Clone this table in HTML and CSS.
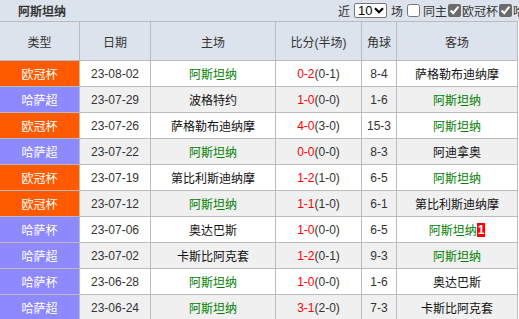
FILE: index.html
```html
<!DOCTYPE html>
<html lang="zh">
<head>
<meta charset="utf-8">
<title>阿斯坦纳</title>
<link rel="stylesheet" href="styles.css">
</head>
<body>
<div class="page">
  <div class="topbar">
    <span class="title">阿斯坦纳</span>
    <div class="controls">
      <span class="lbl">近</span>
      <span class="selwrap">
        <select class="count"><option>10</option><option>20</option></select>
        <svg class="chev" width="10" height="7" viewBox="0 0 10 7"><path d="M1 1.2 L5 5.2 L9 1.2" fill="none" stroke="#000" stroke-width="2.2"/></svg>
      </span>
      <span class="lbl">场</span>
      <input type="checkbox" class="cb cb-first">
      <span class="lbl">同主</span>
      <input type="checkbox" class="cb cb-on" checked>
      <span class="lbl">欧冠杯</span>
      <input type="checkbox" class="cb cb-on" checked>
      <span class="lbl">哈萨超</span>
    </div>
  </div>
  <div class="grid">
    <div class="cell head">类型</div>
    <div class="cell head">日期</div>
    <div class="cell head">主场</div>
    <div class="cell head">比分(半场)</div>
    <div class="cell head">角球</div>
    <div class="cell head">客场</div>

    <div class="cell type ucl">欧冠杯</div>
    <div class="cell date">23-08-02</div>
    <div class="cell team us">阿斯坦纳</div>
    <div class="cell score"><span class="ft">0-2</span>(0-1)</div>
    <div class="cell corner">8-4</div>
    <div class="cell team">萨格勒布迪纳摩</div>

    <div class="cell type kz">哈萨超</div>
    <div class="cell date alt">23-07-29</div>
    <div class="cell team alt">波格特约</div>
    <div class="cell score alt"><span class="ft">1-0</span>(0-0)</div>
    <div class="cell corner alt">1-6</div>
    <div class="cell team us alt">阿斯坦纳</div>

    <div class="cell type ucl">欧冠杯</div>
    <div class="cell date">23-07-26</div>
    <div class="cell team">萨格勒布迪纳摩</div>
    <div class="cell score"><span class="ft">4-0</span>(3-0)</div>
    <div class="cell corner">15-3</div>
    <div class="cell team us">阿斯坦纳</div>

    <div class="cell type kz">哈萨超</div>
    <div class="cell date alt">23-07-22</div>
    <div class="cell team us alt">阿斯坦纳</div>
    <div class="cell score alt"><span class="ft">0-0</span>(0-0)</div>
    <div class="cell corner alt">8-3</div>
    <div class="cell team alt">阿迪拿奥</div>

    <div class="cell type ucl">欧冠杯</div>
    <div class="cell date">23-07-19</div>
    <div class="cell team">第比利斯迪纳摩</div>
    <div class="cell score"><span class="ft">1-2</span>(1-0)</div>
    <div class="cell corner">6-5</div>
    <div class="cell team us">阿斯坦纳</div>

    <div class="cell type ucl">欧冠杯</div>
    <div class="cell date alt">23-07-12</div>
    <div class="cell team us alt">阿斯坦纳</div>
    <div class="cell score alt"><span class="ft">1-1</span>(1-0)</div>
    <div class="cell corner alt">6-1</div>
    <div class="cell team alt">第比利斯迪纳摩</div>

    <div class="cell type kz">哈萨杯</div>
    <div class="cell date">23-07-06</div>
    <div class="cell team">奥达巴斯</div>
    <div class="cell score"><span class="ft">1-0</span>(0-0)</div>
    <div class="cell corner">6-5</div>
    <div class="cell team us">阿斯坦纳<span class="badge">1</span></div>

    <div class="cell type kz">哈萨超</div>
    <div class="cell date alt">23-07-02</div>
    <div class="cell team alt">卡斯比阿克套</div>
    <div class="cell score alt"><span class="ft">1-2</span>(0-1)</div>
    <div class="cell corner alt">9-3</div>
    <div class="cell team us alt">阿斯坦纳</div>

    <div class="cell type kz">哈萨杯</div>
    <div class="cell date">23-06-28</div>
    <div class="cell team us">阿斯坦纳</div>
    <div class="cell score"><span class="ft">1-0</span>(0-0)</div>
    <div class="cell corner">1-6</div>
    <div class="cell team">奥达巴斯</div>

    <div class="cell type kz">哈萨超</div>
    <div class="cell date alt">23-06-24</div>
    <div class="cell team us alt">阿斯坦纳</div>
    <div class="cell score alt"><span class="ft">3-1</span>(2-0)</div>
    <div class="cell corner alt">7-3</div>
    <div class="cell team alt">卡斯比阿克套</div>
  </div>
</div>
</body>
</html>
```
FILE: styles.css
```css
html, body {
  margin: 0;
  padding: 0;
  background: #ffffff;
  overflow: hidden;
}
body {
  font-family: "Liberation Sans", "Noto Sans CJK SC", sans-serif;
  font-size: 12px;
  color: #333333;
}
.page {
  width: 519px;
}
.topbar {
  height: 21px;
  background: #dce3ec;
  display: flex;
  align-items: center;
  white-space: nowrap;
  overflow: hidden;
}
.title {
  margin-left: 18px;
  width: 48px;
  font-weight: bold;
  color: #333333;
}
.controls {
  margin-left: 272px;
  display: flex;
  align-items: center;
  flex: none;
}
.lbl {
  color: #333333;
}
.selwrap {
  position: relative;
  display: inline-flex;
  margin: 0 4px;
}
.count {
  appearance: none;
  -webkit-appearance: none;
  width: 33px;
  height: 15px;
  margin: 0;
  padding: 0 0 0 3px;
  font-family: "Liberation Sans", sans-serif;
  font-size: 13px;
  line-height: 13px;
  border: 1px solid #767676;
  border-radius: 2px;
  background: #ffffff;
  color: #000000;
}
.chev {
  position: absolute;
  right: 3px;
  top: 4px;
  pointer-events: none;
}
.cb {
  width: 13px;
  height: 13px;
  margin: 0;
}
.cb-first {
  margin: 0 3px 0 4px;
}
.cb-on {
  margin: 0 1px 0 1px;
  accent-color: #6b6b6b;
}
.grid {
  display: grid;
  grid-template-columns: 79px 70px 124px 85px 34px 120px;
  grid-template-rows: 38px;
  grid-auto-rows: 25px;
  gap: 1px;
  padding: 1px 1px 0 0;
  background: #bbbbbb;
  width: max-content;
}
.cell {
  display: flex;
  align-items: center;
  justify-content: center;
  background: #ffffff;
  white-space: nowrap;
}
.cell.alt {
  background: #f0f0f0;
}
.head {
  background: #dce3ec;
  color: #333333;
}
.type {
  color: #ffffff;
}
.ucl {
  background: #ff5a00;
}
.kz {
  background: #8f89ff;
}
.date, .corner {
  color: #333333;
}
.team {
  color: #111111;
}
.team.us {
  color: #008000;
}
.score {
  color: #333333;
}
.ft {
  color: #ff0000;
}
.badge {
  display: inline-block;
  background: #ff0000;
  color: #ffffff;
  font-weight: bold;
  font-size: 12px;
  line-height: 14px;
  padding: 0 1px;
}
```
